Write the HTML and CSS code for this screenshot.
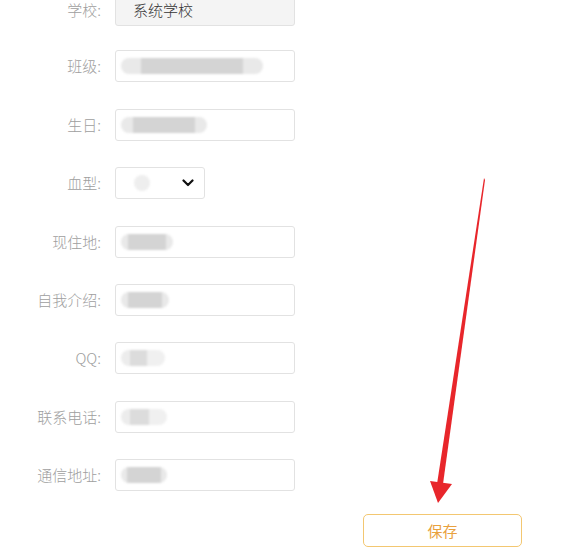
FILE: index.html
```html
<!DOCTYPE html>
<html lang="zh-CN">
<head>
    <meta charset="UTF-8">
    <title>个人资料</title>
    <link rel="stylesheet" href="styles.css">
</head>
<body>
    <div class="form">
        <div class="row first">
            <label class="label">学校:</label>
            <div class="field disabled">系统学校</div>
        </div>
        <div class="row">
            <label class="label">班级:</label>
            <div class="field"><span class="blur" style="width:142px"></span></div>
        </div>
        <div class="row">
            <label class="label">生日:</label>
            <div class="field"><span class="blur" style="width:86px"></span></div>
        </div>
        <div class="row">
            <label class="label">血型:</label>
            <div class="field select">
                <span class="blur dot"></span>
                <svg class="chevron" width="12" height="8" viewBox="0 0 12 8"><path d="M1.5 1.5 L6 6 L10.5 1.5" fill="none" stroke="#111" stroke-width="2.2" stroke-linecap="round" stroke-linejoin="round"/></svg>
            </div>
        </div>
        <div class="row">
            <label class="label">现住地:</label>
            <div class="field"><span class="blur" style="width:52px"></span></div>
        </div>
        <div class="row">
            <label class="label">自我介绍:</label>
            <div class="field"><span class="blur" style="width:48px"></span></div>
        </div>
        <div class="row">
            <label class="label">QQ:</label>
            <div class="field"><span class="blur light" style="width:44px"></span></div>
        </div>
        <div class="row">
            <label class="label">联系电话:</label>
            <div class="field"><span class="blur light" style="width:46px"></span></div>
        </div>
        <div class="row">
            <label class="label">通信地址:</label>
            <div class="field"><span class="blur" style="width:46px"></span></div>
        </div>
        <div class="actions">
            <button class="save">保存</button>
        </div>
    </div>

    <!-- annotation arrow drawn over the page -->
    <svg class="arrow" width="581" height="555" viewBox="0 0 581 555">
        <path d="M484 178 L485 180 L443 484 L437 484 Z" fill="#e8262b"/>
        <path d="M430 481 L452 484 L438 503 Z" fill="#e8262b"/>
    </svg>
</body>
</html>
```

FILE: styles.css
```css
body {
    margin: 0;
    background: #fff;
    font-family: "Noto Sans CJK SC", "Microsoft YaHei", sans-serif;
    font-size: 15px;
    line-height: 20px;
}
.form {
    margin-top: -6px;
}
.row {
    display: flex;
    align-items: center;
    margin-bottom: 26.4px;
}
.row.first {
    margin-bottom: 24.4px;
}
.label {
    width: 101px;
    text-align: right;
    color: #9e9e9e;
    font-weight: 300;
    margin-right: 14px;
}
.field {
    box-sizing: border-box;
    width: 180px;
    height: 32px;
    border: 1px solid #e2e2e2;
    border-radius: 3px;
    display: flex;
    align-items: center;
    padding: 0 5px;
    color: #333;
}
.field.disabled {
    background: #f4f4f4;
    padding-left: 17px;
    font-weight: 300;
}
.select {
    width: 90px;
    justify-content: space-between;
    padding: 0 10px 0 18px;
}
.blur {
    display: inline-block;
    height: 16px;
    border-radius: 8px;
    background: linear-gradient(to right, #e9e9e9 0 14%, #d4d4d4 14% 86%, #e9e9e9 86%);
    filter: blur(1px);
}
.blur.light {
    background: linear-gradient(to right, #ececec 0 20%, #dcdcdc 20% 60%, #f0f0f0 60%);
}
.blur.dot {
    width: 16px;
    height: 16px;
    border-radius: 50%;
    background: #eee;
}
.chevron { display: block; }
.actions {
    padding-left: 363px;
    margin-top: -4px;
}
.save {
    width: 159px;
    height: 33px;
    background: #fff;
    border: 1px solid #f3c771;
    border-radius: 5px;
    color: #e9a13e;
    font-family: inherit;
    font-size: 15px;
    cursor: pointer;
}
.arrow {
    position: absolute;
    left: 0;
    top: 0;
    pointer-events: none;
}
```
